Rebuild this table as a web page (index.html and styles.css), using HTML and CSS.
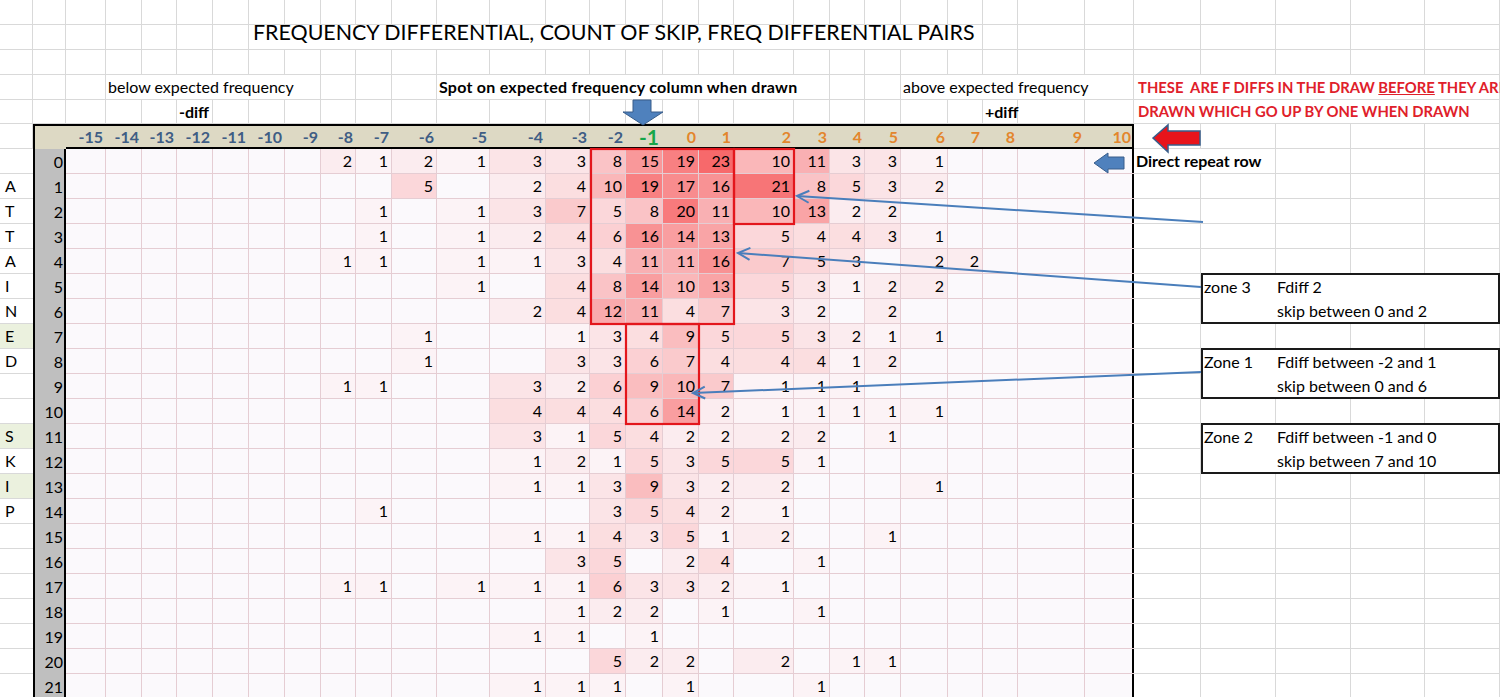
FILE: index.html
```html
<!DOCTYPE html>
<html lang="en">
<head>
<meta charset="utf-8">
<title>Frequency differential</title>
<link rel="stylesheet" href="styles.css">
</head>
<body>
<div class="page">
  <div class="sheet" id="sheet"></div>
  <svg class="overlay" width="1500" height="699" viewBox="0 0 1500 699">
    <defs>
      <marker id="ah" markerUnits="userSpaceOnUse" markerWidth="16" markerHeight="16" viewBox="-14 -8 16 16" refX="0" refY="0" orient="auto">
        <path d="M-12,-6 L0,0 L-12,6" fill="none" stroke="#4a7ebb" stroke-width="2"/>
      </marker>
    </defs>
    <g fill="none" stroke="#e3161c" stroke-width="2.2">
      <rect x="591" y="149" width="143" height="175"/>
      <rect x="734" y="149" width="60" height="75"/>
      <rect x="626" y="324" width="73" height="100"/>
    </g>
    <g fill="none" stroke="#4a7ebb" stroke-width="2">
      <line x1="1203" y1="222" x2="797" y2="196" marker-end="url(#ah)"/>
      <line x1="1201" y1="287" x2="738" y2="253" marker-end="url(#ah)"/>
      <line x1="1201" y1="372" x2="693" y2="393" marker-end="url(#ah)"/>
    </g>
    <polygon points="633,100 651,100 651,112 663,112 643,125 623,112 633,112" fill="#4f81bd" stroke="#385d8a" stroke-width="1"/>
    <polygon points="1094,163 1108,153 1108,157 1124,157 1124,169 1108,169 1108,173" fill="#4f81bd" stroke="#385d8a" stroke-width="1"/>
    <polygon points="1153,138 1168,125 1168,131 1200,131 1200,145 1168,145 1168,152" fill="#e8141b" stroke="#385d8a" stroke-width="1.5"/>
  </svg>
</div>
<script src="script.js"></script>
</body>
</html>
```

FILE: styles.css
```css
html, body {
  margin: 0;
  padding: 0;
  background: #fff;
}
body {
  width: 1500px;
  height: 697px;
  overflow: hidden;
  font-family: "Lato", "Open Sans", sans-serif;
  font-size: 16px;
  color: #000;
}
.page {
  position: relative;
  width: 1500px;
  height: 699px;
}
.sheet {
  display: grid;
  grid-template-columns: 33px 33px 40px 36px 35px 36px 36px 36px 36px 35px 36px 45px 53px 56px 44px 36px 37px 36px 35px 60px 36px 35px 36px 47px 35px 35px 67px 49px 67px 75px 75px 74px 75px;
  grid-template-rows: 25px 25px 25px 25px 24px repeat(23, 25px);
}
.c {
  box-sizing: border-box;
  border-right: 1px solid #d9d9d9;
  border-bottom: 1px solid #d9d9d9;
  display: flex;
  align-items: center;
  white-space: nowrap;
  padding: 0 2px;
  line-height: 1;
  min-width: 0;
}
.s2 { grid-column: span 2; }
.s5 { grid-column: span 5; }
.s6 { grid-column: span 6; }
.s9 { grid-column: span 9; }
.s18 { grid-column: span 18; }
.b { font-weight: 700; }
.sp { letter-spacing: 0.25px; }
.title {
  font-size: 21.4px;
  align-items: flex-start;
  line-height: 15px;
  padding-top: 0;
  padding-left: 4px;
}
.red {
  color: #e0202a;
  font-weight: 700;
  font-size: 14.8px;
  white-space: pre;
  padding-left: 4px;
}
.red u { text-decoration: underline; }
.hd {
  border: 0;
  background: #ddd9c4;
  box-shadow: inset 0 2px 0 #000, inset 0 -2px 0 #000;
  font-weight: 700;
  justify-content: flex-end;
  color: #3f5d84;
  padding-right: 3px;
}
.hd.first { box-shadow: inset 0 2px 0 #000, inset 2px 0 0 #000; }
.hd.o { color: #e3862d; }
.hd.g { color: #16a64a; font-size: 21px; padding-right: 4px; }
.hd.last { box-shadow: inset 0 2px 0 #000, inset 0 -2px 0 #000, inset -2px 0 0 #000; }
.l { border-right: 0; padding-left: 5px; }
.l.gr { background: #ebf1de; }
.rn {
  border: 0;
  background: #bfbfbf;
  box-shadow: inset 2px 0 0 #000, inset -2px 0 0 #000;
  justify-content: flex-end;
  padding-right: 3px;
}
.d {
  border-color: #e5cdd3;
  background: #fbf9fc;
  justify-content: flex-end;
  padding-right: 3px;
}
.d.last {
  border-right: 0;
  box-shadow: inset -2px 0 0 #000;
}
.zone {
  grid-column: 30 / span 4;
  box-sizing: border-box;
  border: 2px solid #1a1a1a;
  background: #fff;
  display: grid;
  grid-template-columns: 73px 1fr;
  grid-template-rows: 1fr 1fr;
  margin-top: -1px;
}
.zone span {
  display: flex;
  align-items: center;
  padding-left: 1px;
  white-space: nowrap;
}
.z3 { grid-row: 12 / span 2; }
.z1 { grid-row: 15 / span 2; }
.z2 { grid-row: 18 / span 2; }
.overlay {
  position: absolute;
  left: 0;
  top: 0;
  pointer-events: none;
}
```

FILE: script.js
```js
(function () {
  var sheet = document.getElementById('sheet');
  function add(cls, text, html) {
    var d = document.createElement('div');
    d.className = 'c' + (cls ? ' ' + cls : '');
    if (html) d.innerHTML = text;
    else if (text != null) d.textContent = text;
    sheet.appendChild(d);
    return d;
  }
  function empties(n) { for (var i = 0; i < n; i++) add(''); }

  var data = [
    "-8:2 -7:1 -6:2 -5:1 -4:3 -3:3 -2:8 -1:15 0:19 1:23 2:10 3:11 4:3 5:3 6:1",
    "-6:5 -4:2 -3:4 -2:10 -1:19 0:17 1:16 2:21 3:8 4:5 5:3 6:2",
    "-7:1 -5:1 -4:3 -3:7 -2:5 -1:8 0:20 1:11 2:10 3:13 4:2 5:2",
    "-7:1 -5:1 -4:2 -3:4 -2:6 -1:16 0:14 1:13 2:5 3:4 4:4 5:3 6:1",
    "-8:1 -7:1 -5:1 -4:1 -3:3 -2:4 -1:11 0:11 1:16 2:7 3:5 4:3 6:2 7:2",
    "-5:1 -3:4 -2:8 -1:14 0:10 1:13 2:5 3:3 4:1 5:2 6:2",
    "-4:2 -3:4 -2:12 -1:11 0:4 1:7 2:3 3:2 5:2",
    "-6:1 -3:1 -2:3 -1:4 0:9 1:5 2:5 3:3 4:2 5:1 6:1",
    "-6:1 -3:3 -2:3 -1:6 0:7 1:4 2:4 3:4 4:1 5:2",
    "-8:1 -7:1 -4:3 -3:2 -2:6 -1:9 0:10 1:7 2:1 3:1 4:1",
    "-4:4 -3:4 -2:4 -1:6 0:14 1:2 2:1 3:1 4:1 5:1 6:1",
    "-4:3 -3:1 -2:5 -1:4 0:2 1:2 2:2 3:2 5:1",
    "-4:1 -3:2 -2:1 -1:5 0:3 1:5 2:5 3:1",
    "-4:1 -3:1 -2:3 -1:9 0:3 1:2 2:2 6:1",
    "-7:1 -2:3 -1:5 0:4 1:2 2:1",
    "-4:1 -3:1 -2:4 -1:3 0:5 1:1 2:2 5:1",
    "-3:3 -2:5 0:2 1:4 3:1",
    "-8:1 -7:1 -5:1 -4:1 -3:1 -2:6 -1:3 0:3 1:2 2:1",
    "-3:1 -2:2 -1:2 1:1 3:1",
    "-4:1 -3:1 -1:1",
    "-2:5 -1:2 0:2 2:2 4:1 5:1",
    "-4:1 -3:1 -2:1 0:1 3:1"
  ];
  function parse(s) {
    var m = {};
    s.split(' ').forEach(function (p) {
      var kv = p.split(':');
      m[kv[0]] = parseInt(kv[1], 10);
    });
    return m;
  }
  function heat(v) {
    var t = Math.min(1, Math.pow(v / 23, 0.9));
    var r = Math.round(252 + (247 - 252) * t);
    var g = Math.round(252 + (105 - 252) * t);
    var b = Math.round(255 + (107 - 255) * t);
    return 'rgb(' + r + ',' + g + ',' + b + ')';
  }

  // row 1
  empties(33);
  // row 2: title
  empties(7);
  add('title s18', 'FREQUENCY DIFFERENTIAL, COUNT OF SKIP, FREQ DIFFERENTIAL PAIRS');
  empties(8);
  // row 3
  empties(33);
  // row 4
  empties(3);
  add('s6', 'below expected frequency');
  empties(3);
  add('s9 b sp', 'Spot on expected frequency column when drawn');
  empties(2);
  add('s5', 'above expected frequency');
  add('s5 red', 'THESE  ARE F DIFFS IN THE DRAW <u>BEFORE</u> THEY ARE', true);
  // row 5
  empties(5);
  add('b', '-diff');
  empties(19);
  add('b', '+diff');
  empties(2);
  add('s5 red', 'DRAWN WHICH GO UP BY ONE WHEN DRAWN');
  // header row
  add('');
  add('hd first', '');
  for (var k = -15; k <= 10; k++) {
    var cls = 'hd';
    if (k === -1) cls += ' g';
    else if (k >= 0) cls += ' o';
    if (k === 10) cls += ' last';
    add(cls, String(k));
  }
  empties(5);

  var letters = {1: 'A', 2: 'T', 3: 'T', 4: 'A', 5: 'I', 6: 'N', 7: 'E', 8: 'D', 11: 'S', 12: 'K', 13: 'I', 14: 'P'};
  var green = {7: 1, 11: 1, 13: 1};
  var boxRows = {5: 1, 6: 1, 8: 1, 9: 1, 11: 1, 12: 1};
  for (var d = 0; d < 22; d++) {
    add('l' + (green[d] ? ' gr' : ''), letters[d] || '');
    add('rn', String(d));
    var m = parse(data[d]);
    for (var c = -15; c <= 10; c++) {
      var v = m[String(c)];
      var el = add('d' + (c === 10 ? ' last' : ''), v ? String(v) : '');
      if (v) el.style.background = heat(v);
    }
    if (d === 0) { add('s2 b', 'Direct repeat row'); empties(3); }
    else if (boxRows[d]) add('');
    else empties(5);
  }

  function box(cls, a, b, c) {
    var el = document.createElement('div');
    el.className = 'zone ' + cls;
    el.innerHTML = '<span>' + a + '</span><span>' + b + '</span><span></span><span>' + c + '</span>';
    sheet.appendChild(el);
  }
  box('z3', 'zone 3', 'Fdiff 2', 'skip between 0 and 2');
  box('z1', 'Zone 1', 'Fdiff between -2 and 1', 'skip between 0 and 6');
  box('z2', 'Zone 2', 'Fdiff between -1 and 0', 'skip between 7 and 10');
})();
```
